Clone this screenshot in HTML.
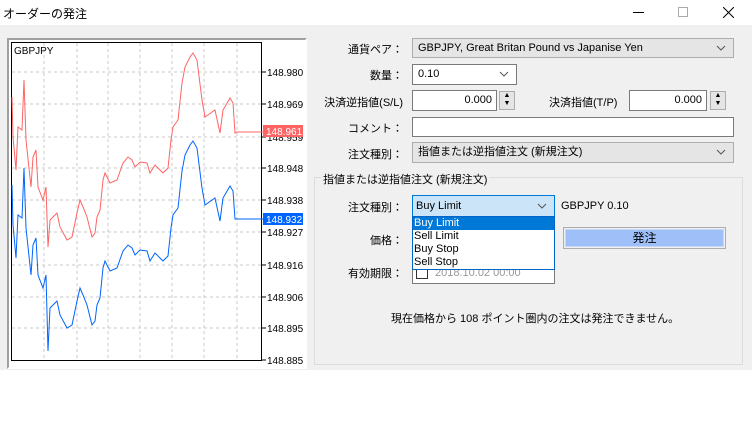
<!DOCTYPE html>
<html><head><meta charset="utf-8"><style>
*{margin:0;padding:0;box-sizing:border-box}
body{width:752px;height:434px;background:#fff;font-family:"Liberation Sans","Noto Sans CJK JP",sans-serif;font-size:11px;color:#000;position:relative;overflow:hidden}
.a{position:absolute}
.lbl{position:absolute;text-align:right;white-space:nowrap}
.box{position:absolute;background:#fff;border:1px solid #7a7a7a}
.cb{position:absolute;background:#e5e5e5;border:1px solid #adadad;padding-left:5px;line-height:18px;white-space:nowrap}
.chev{position:absolute;right:7px;top:6px;width:10px;height:6px}
</style></head><body>
<div class="a" style="left:0;top:0;width:752px;height:25px;background:#fff"></div>
<div class="a" style="left:3px;top:5px;font-size:12px">オーダーの発注</div>
<div class="a" style="left:633px;top:12px;width:11px;height:1px;background:#000"></div>
<div class="a" style="left:678px;top:7px;width:10px;height:10px;border:1px solid #aaa"></div>
<svg class="a" style="left:723px;top:7px" width="11" height="11"><path d="M0 0L11 11M11 0L0 11" stroke="#000" stroke-width="1"/></svg>
<div class="a" style="left:0;top:25px;width:752px;height:345px;background:#f0f0f0"></div>
<!-- chart -->
<div class="a" style="left:7px;top:38px;width:300px;height:331px;background:#fff;border:2px solid #a0a0a0;border-right-color:#fff;border-bottom-color:#fff"></div>
<svg class="a" style="left:0;top:0" width="310" height="370">
<rect x="11.5" y="42.5" width="250" height="318" fill="#fff" stroke="#000"/>
<g stroke="#c8c8c8" stroke-dasharray="3,3">
<path d="M12 72H262M12 104H262M12 137H262M12 168H262M12 200H262M12 232H262M12 265H262M12 297H262M12 328H262"/>
<path d="M44 43V360M77 43V360M108 43V360M140 43V360M172 43V360M204 43V360M237 43V360"/>
</g>
<g stroke="#000"><path d="M262 72h4M262 104h4M262 137h4M262 168h4M262 200h4M262 232h4M262 265h4M262 297h4M262 328h4M262 360h4"/></g>
<g font-size="10" font-family="Liberation Sans,sans-serif">
<text x="267" y="76">148.980</text><text x="267" y="108">148.969</text><text x="267" y="141">148.959</text><text x="267" y="172">148.948</text><text x="267" y="204">148.938</text><text x="267" y="236">148.927</text><text x="267" y="269">148.916</text><text x="267" y="301">148.906</text><text x="267" y="332">148.895</text><text x="267" y="364">148.885</text>
<text x="14" y="54" font-size="10">GBPJPY</text>
</g>
<g fill="none" stroke-width="1">
<polyline stroke="#ff6464" points="12,97 13,137 16,170 18,127 22,130 24,80 26,140 31,187 33,157 36,150 38,187 43,200 46,187 48,247 50,220 57,213 60,227 67,240 72,237 77,213 80,200 83,207 87,217 92,237 95,233 97,217 100,210 103,180 105,173 110,183 117,180 123,163 128,157 132,160 135,167 140,162 147,163 150,173 155,165 163,173 168,168 171,140 173,127 178,120 182,83 185,67 190,57 193,53 197,60 202,100 205,117 215,110 220,133 223,110 230,98 233,103 235,133 237,132 263,132"/>
<polyline stroke="#0064ff" transform="translate(0,88)" points="12,97 13,137 16,170 18,127 22,130 24,80 26,140 31,187 33,157 36,150 38,187 43,200 46,187 48,263 50,220 57,213 60,227 67,240 72,237 77,213 80,200 83,207 87,217 92,237 95,233 97,217 100,210 103,180 105,173 110,183 117,180 123,163 128,157 132,160 135,167 140,162 147,163 150,173 155,165 163,173 168,168 171,140 173,127 178,120 182,83 185,67 190,57 193,53 197,60 202,100 205,117 215,110 220,133 223,110 230,98 233,103 235,131 237,131 263,131"/>
</g>
<rect x="263" y="125" width="40" height="12" fill="#ff6464"/><text x="266" y="135" fill="#fff" font-size="10" font-family="Liberation Sans,sans-serif">148.961</text>
<rect x="263" y="213" width="40" height="12" fill="#0064ff"/><text x="266" y="223" fill="#fff" font-size="10" font-family="Liberation Sans,sans-serif">148.932</text>
</svg>
<!-- form -->
<div class="lbl" style="right:349px;top:41px">通貨ペア：</div>
<div class="cb" style="left:412px;top:38px;width:322px;height:20px">GBPJPY, Great Britan Pound vs Japanise Yen<svg class="chev" viewBox="0 0 10 6"><path d="M1 1L5 5L9 1" fill="none" stroke="#555"/></svg></div>
<div class="lbl" style="right:349px;top:67px">数量：</div>
<div class="box" style="left:412px;top:64px;width:105px;height:21px;padding-left:5px;line-height:19px">0.10<svg class="chev" viewBox="0 0 10 6"><path d="M1 1L5 5L9 1" fill="none" stroke="#555"/></svg></div>
<div class="lbl" style="right:349px;top:94px">決済逆指値(S/L)</div>
<div class="box" style="left:412px;top:90px;width:85px;height:21px;text-align:right;padding-right:4px;line-height:19px">0.000</div>
<div class="a" style="left:499px;top:91px;width:16px;height:19px;border:1px solid #adadad;background:#e5e5e5;font-size:7px;line-height:8px;text-align:center">▲<br>▼</div>
<div class="lbl" style="left:549px;top:94px">決済指値(T/P)</div>
<div class="box" style="left:629px;top:90px;width:78px;height:21px;text-align:right;padding-right:4px;line-height:19px">0.000</div>
<div class="a" style="left:710px;top:91px;width:16px;height:19px;border:1px solid #adadad;background:#e5e5e5;font-size:7px;line-height:8px;text-align:center">▲<br>▼</div>
<div class="lbl" style="right:349px;top:120px">コメント：</div>
<div class="box" style="left:412px;top:117px;width:322px;height:20px"></div>
<div class="lbl" style="right:349px;top:146px">注文種別：</div>
<div class="cb" style="left:412px;top:142px;width:322px;height:21px">指値または逆指値注文 (新規注文)<svg class="chev" viewBox="0 0 10 6"><path d="M1 1L5 5L9 1" fill="none" stroke="#555"/></svg></div>
<div class="a" style="left:314px;top:177px;width:429px;height:188px;border:1px solid #dcdcdc"></div>
<div class="a" style="left:321px;top:171px;background:#f0f0f0;padding:0 2px">指値または逆指値注文 (新規注文)</div>
<div class="lbl" style="right:349px;top:199px">注文種別：</div>
<div class="a" style="left:412px;top:195px;width:143px;height:22px;background:#cce4f7;border:1px solid #0078d7;padding-left:3px;line-height:20px">Buy Limit<svg class="chev" style="top:7px" viewBox="0 0 10 6"><path d="M1 1L5 5L9 1" fill="none" stroke="#555"/></svg></div>
<div class="a" style="left:561px;top:200px">GBPJPY 0.10</div>
<div class="lbl" style="right:349px;top:232px">価格：</div>
<div class="a" style="left:563px;top:227px;width:163px;height:22px;border:1px solid #adadad;background:#f0f0f0"><div style="margin:1px;height:18px;background:#9fbff9;border:1px solid #c6d8fa;text-align:center;line-height:16px;font-size:12px">発注</div></div>
<div class="lbl" style="right:349px;top:265px">有効期限：</div>
<div class="box" style="left:412px;top:255px;width:143px;height:29px;color:#999;padding:10px 0 0 22px;line-height:14px">2018.10.02 00:00</div>
<div class="a" style="left:416px;top:267px;width:12px;height:12px;border:1px solid #333;background:#fff"></div>
<div class="a" style="left:412px;top:216px;width:143px;height:54px;background:#fff;border:1px solid #0064c8;line-height:13px">
<div style="background:#0078d7;color:#fff;padding-left:1px">Buy Limit</div>
<div style="padding-left:1px">Sell Limit</div>
<div style="padding-left:1px">Buy Stop</div>
<div style="padding-left:1px">Sell Stop</div>
</div>
<div class="a" style="left:391px;top:310px">現在価格から 108 ポイント圏内の注文は発注できません。</div>
</body></html>
